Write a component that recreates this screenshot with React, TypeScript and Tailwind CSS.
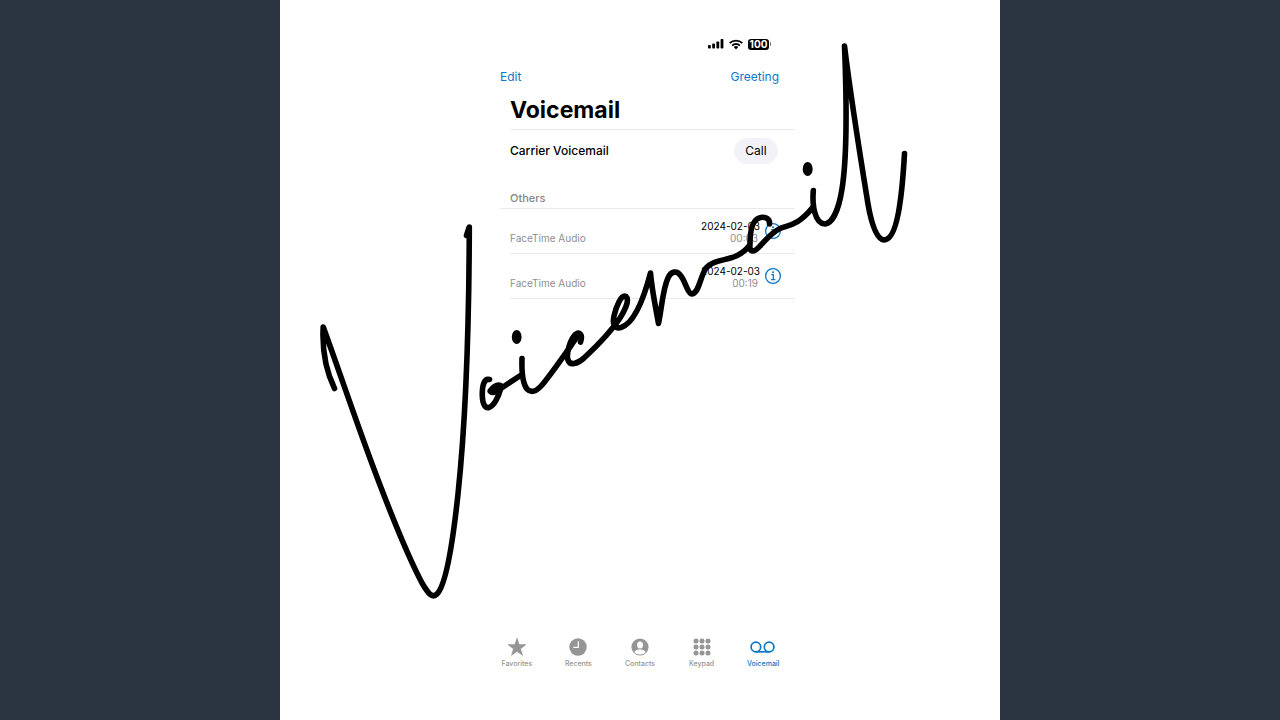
import { useState } from "react";

const calls = [
  { id: 1, source: "FaceTime Audio", date: "2024-02-03", length: "00:03" },
  { id: 2, source: "FaceTime Audio", date: "2024-02-03", length: "00:19" },
];

const tabs = ["Favorites", "Recents", "Contacts", "Keypad", "Voicemail"];

function TabIcon({ name }: { name: string }) {
  return (
    <svg viewBox="0 0 28 20" className="h-5 w-7" fill="currentColor" aria-hidden="true">
      {name === "Favorites" && (
        <path
          d="M14 1l2.200 6.500 6.900.1-5.500 4.200 2 6.600-5.600-3.900-5.600 3.900 2-6.600-5.500-4.200 6.900-.1z"
          stroke="currentColor"
          strokeWidth=".5"
          strokeLinejoin="round"
        />
      )}
      {name === "Recents" && (
        <>
          <circle cx="14" cy="10" r="8.700" />
          <path d="M14.300 4.500v5.800H9.800" fill="none" stroke="#fff" strokeWidth="1.200" strokeLinecap="round" />
        </>
      )}
      {name === "Contacts" && (
        <>
          <circle cx="14" cy="10" r="8.600" />
          <ellipse cx="14" cy="8.100" rx="3" ry="3.500" fill="#fff" />
          <path d="M8.300 15.200c1.200-2.100 3.300-2.900 5.700-2.900s4.500.8 5.700 2.900A7.600 7.600 0 0 1 14 17.500a7.600 7.600 0 0 1-5.700-2.300z" fill="#fff" />
        </>
      )}
      {name === "Keypad" &&
        [4, 10, 16].map((y) => [8, 14, 20].map((x) => <circle key={`${x}-${y}`} cx={x} cy={y} r="2.500" />))}
      {name === "Voicemail" && (
        <g fill="none" stroke="currentColor" strokeWidth="1.700">
          <circle cx="6.900" cy="10" r="4.800" />
          <circle cx="20.100" cy="10" r="4.800" />
          <path d="M6.900 14.800h13.200" />
        </g>
      )}
    </svg>
  );
}

function StatusBar() {
  return (
    <div className="flex h-4 items-center justify-end gap-1 pr-6">
      <svg viewBox="0 0 16 10" className="h-[10px] w-4" aria-hidden="true">
        <rect x="0" y="6" width="2.800" height="3.500" rx=".8" />
        <rect x="4.200" y="4.500" width="2.800" height="5" rx=".8" />
        <rect x="8.400" y="2.500" width="2.800" height="7" rx=".8" />
        <rect x="12.600" y="0" width="2.800" height="9.500" rx=".8" />
      </svg>
      <svg viewBox="0 0 16 12" className="h-3 w-4" fill="none" stroke="#000" strokeWidth="1.800" aria-hidden="true">
        <path d="M1.700 5.100a9 9 0 0 1 12.600 0" />
        <path d="M4.100 7.600a5.600 5.600 0 0 1 7.800 0" />
        <path d="M8 11.400L5.700 9.100a3.300 3.300 0 0 1 4.600 0z" fill="#000" stroke="none" />
      </svg>
      <div className="flex items-center gap-px">
        <span className="flex h-[11px] w-[21px] items-center justify-center rounded-[3px] bg-black text-[10px] font-bold text-white">
          100
        </span>
        <span className="h-1 w-px rounded-r bg-gray-500" />
      </div>
    </div>
  );
}

// Handwritten title that runs over the whole sheet
function Signature() {
  return (
    <svg
      viewBox="0 0 720 720"
      className="pointer-events-none absolute top-0 left-0 aspect-square w-full"
      aria-hidden="true"
    >
      <g transform="translate(-280 0)" fill="none" stroke="#000" strokeWidth="5.600" strokeLinecap="round" strokeLinejoin="round">
        <path d="M334.500 388.500C326 371 322 350 323.200 327C339 370 358 428 380 485C398 532 412 564 422 583C428 593 432 599 437 594C446 585 453 541 458 494C465 428 469 340 469.300 227L466.500 235.500L469.300 234" />
        <path d="M489.500 379.500C484 378 482 386 482.300 396C482.600 404 485 408.500 489 407.500C494 406 498.500 397 500.500 389" />
        <path d="M491 391C494 387 497 385 500 386C497 391 493 393 491 391" fill="#000" strokeWidth="7" />
        <path d="M500 389L522 374.500" />
        <path d="M522 358.500C521.500 374 523 384 527 389C531 393 536 392 542 385C552 373 565 354 577 337" />
        <path d="M580.500 342C583 335 580 331.500 576 334C570 339 566 354 568 360C570 366 577 364 584 358C598 345 612 330 620 318C627 307 629 299 626 296.500C621 294 616 307 614 316C612 325 615 329 621 327.500C635 323 645 294 650.500 273C652 291 656 309 658.500 323.500C662 306 663 288 668 278C671 271 677 270 681 276C685 281 688 294 692 294C699 293 700 277 706 268C715 257 736 263 749 246" />
        <path d="M769.500 224C770 218 764 216 759 218C751 221 750 236 750 244C749 253 754 253 760 246C767 239 772 232 780 228.500C788 225 798 226 813 207" />
        <path d="M813.300 190.500C812 206 815 224 825 224C833 223 839 208 842 189C847 158 847 108 844.500 46C849 83 861 161 868 204C872 227 877 239 884 240C897 240 902 198 904.500 153.500" />
      </g>
      <ellipse cx="236.700" cy="337" rx="4.900" ry="7" />
      <ellipse cx="527.700" cy="169" rx="5" ry="7" />
    </svg>
  );
}

export default function App() {
  const [active, setActive] = useState("Voicemail");

  return (
    <div className="flex min-h-screen justify-center bg-[#2a3440] font-[Inter,sans-serif] text-black">
      <main className="relative flex min-h-screen w-full max-w-[720px] justify-center bg-white">
        <div className="flex w-full max-w-[310px] flex-col pt-9 pb-13">
          <StatusBar />

          <div className="mt-4 flex justify-between pt-px pr-4 pl-[15px] text-xs leading-4 text-[#0b77c8]">
            <button>Edit</button>
            <button>Greeting</button>
          </div>

          <div className="ml-[25px]">
            <h1 className="border-b border-[#ebebed] pt-[9px] pb-[3px] text-[23px] leading-8 font-bold">Voicemail</h1>
            <div className="flex h-[42px] items-center justify-between pr-[17px] text-xs font-medium">
              <span>Carrier Voicemail</span>
              <button className="h-[26px] w-11 rounded-full bg-[#f2f2f8] font-normal">Call</button>
            </div>
          </div>

          <h2 className="mt-[14px] ml-[15px] border-b border-[#ebebed] pt-[6px] pb-[3px] pl-[10px] text-[11px] leading-[13px] font-medium text-[#858589]">
            Others
          </h2>

          <ul className="ml-[25px]">
            {calls.map((call) => (
              <li key={call.id} className="flex h-[45px] items-center border-b border-[#ebebed] pr-[13px]">
                <span className="mt-[14px] text-[10px] text-[#8e8e92]">{call.source}</span>
                <div className="mt-[2px] ml-auto text-right leading-3">
                  <p className="text-[10px]">{call.date}</p>
                  <p className="pr-[2px] text-[10px] text-[#8e8e92]">{call.length}</p>
                </div>
                <button aria-label="Call details" className="ml-1 text-[#0b77c8]">
                  <svg viewBox="0 0 18 18" className="size-[18px]" fill="none" stroke="currentColor" strokeWidth="1.300">
                    <circle cx="9" cy="9" r="7.400" />
                    <path d="M7.300 7.600h2v5M7 12.700h4.400" />
                    <circle cx="9" cy="5.200" r="1" fill="currentColor" stroke="none" />
                  </svg>
                </button>
              </li>
            ))}
          </ul>

          <nav className="mt-auto flex px-px">
            {tabs.map((tab) => (
              <button
                key={tab}
                onClick={() => setActive(tab)}
                className={`flex flex-1 flex-col items-center gap-[2px] text-[7px] leading-[9px] font-medium ${
                  active === tab ? "text-[#0b77c8]" : "text-[#959595]"
                }`}
              >
                <TabIcon name={tab} />
                {tab}
              </button>
            ))}
          </nav>
        </div>
        <Signature />
      </main>
    </div>
  );
}
